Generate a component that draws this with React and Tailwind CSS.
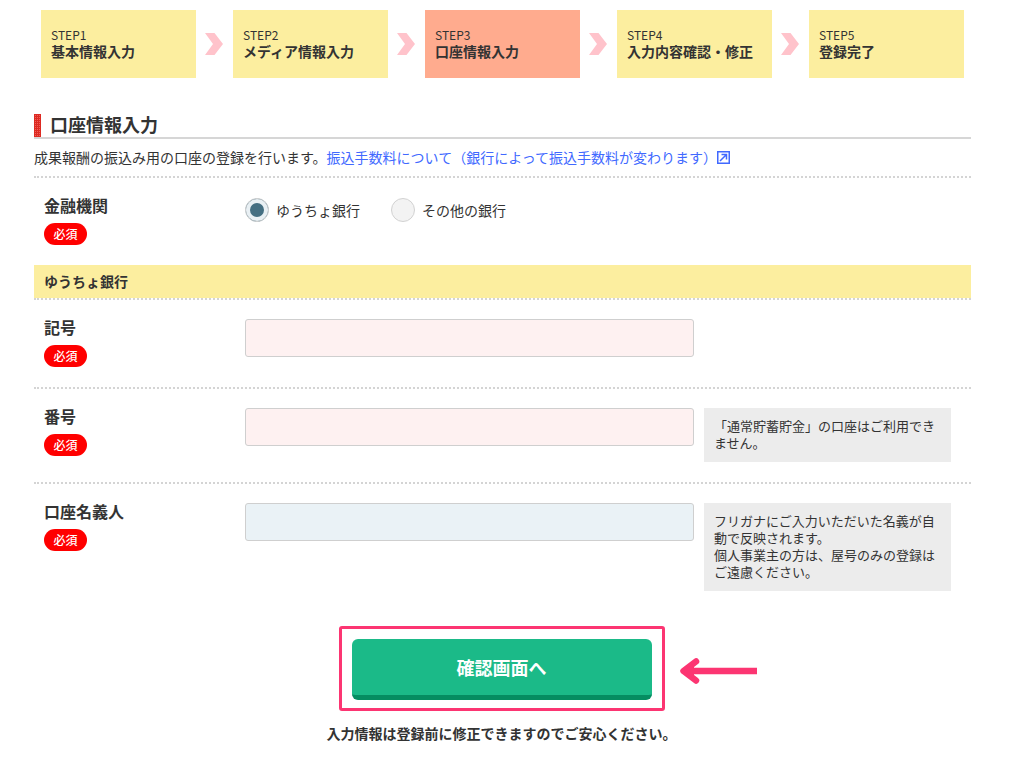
import { Fragment } from "react";

const steps = [
  { label: "STEP1", title: "基本情報入力" },
  { label: "STEP2", title: "メディア情報入力" },
  { label: "STEP3", title: "口座情報入力", current: true },
  { label: "STEP4", title: "入力内容確認・修正" },
  { label: "STEP5", title: "登録完了" },
];

function StepArrow() {
  return (
    <svg className="block h-[22px] w-[18px] shrink-0" viewBox="0 0 18 22" aria-hidden="true">
      <path d="M0 0h9.5L18 11 9.5 22H0l8-11z" fill="#ffc3cb" />
    </svg>
  );
}

function Steps() {
  return (
    <ol className="flex items-center gap-[9px] px-[7px]">
      {steps.map((step, i) => (
        <Fragment key={step.label}>
          {i > 0 && (
            <li aria-hidden="true" className="pr-px pb-px">
              <StepArrow />
            </li>
          )}
          <li
            aria-current={step.current ? "step" : undefined}
            className={
              "flex h-[68px] min-w-0 flex-1 flex-col justify-center pb-[2px] pl-[10px] " +
              (step.current ? "bg-[#ffab8e]" : "bg-[#fcee9f]")
            }
          >
            <span className="text-xs leading-4">{step.label}</span>
            <span className="text-sm leading-4 font-bold whitespace-nowrap">{step.title}</span>
          </li>
        </Fragment>
      ))}
    </ol>
  );
}

function Required() {
  return (
    <span className="flex h-[22px] w-[43px] items-center justify-center rounded-full bg-[#ff0000] text-xs font-medium text-white">
      必須
    </span>
  );
}

const rowClass =
  "grid grid-cols-[191px_1fr_247px] items-start gap-x-[10px] pt-[19px] pr-5 pb-5 pl-[10px]";
const titleClass = "flex flex-col items-start gap-[10px] text-base leading-4 font-bold";

function Field({ id, label, tone, note, last }) {
  return (
    <div className={rowClass + (last ? "" : " border-b-2 border-dotted border-[#d4d4d4]")}>
      <label htmlFor={id} className={titleClass}>
        {label}
        <Required />
      </label>
      <input
        id={id}
        type="text"
        required
        aria-describedby={note ? id + "-note" : undefined}
        className={
          "h-[38px] w-full rounded-[3px] border border-[#cfcfcf] px-2 text-sm outline-none " +
          (tone === "blue" ? "bg-[#eaf2f6]" : "bg-[#fef1f1]")
        }
      />
      {note && (
        <p id={id + "-note"} className="bg-[#ececec] px-[10px] pt-[9px] pb-[11px] text-[13px] leading-[17px]">
          {note}
        </p>
      )}
    </div>
  );
}

function BankRadio({ label, ...props }) {
  return (
    <label className="flex items-center gap-[7px] text-sm">
      <input
        type="radio"
        name="bank"
        className="size-6 appearance-none rounded-full border border-[#d2d2d2] bg-[#f3f3f3] checked:bg-[#446f82] checked:shadow-[inset_0_0_0_4px_#e9f0f4]"
        {...props}
      />
      {label}
    </label>
  );
}

export default function App() {
  return (
    <main className="min-h-screen bg-white pt-[10px] pr-[53px] pb-5 pl-[34px] font-['Noto_Sans_CJK_JP',sans-serif] text-[#333]">
      <Steps />

      <h1 className="mt-9 flex items-stretch gap-[9px] border-b-2 border-[#d6d6d6] text-lg font-bold">
        <span
          aria-hidden="true"
          className="w-[7px] bg-[#f0605a] bg-[linear-gradient(#dd2a22_1px,transparent_1px),linear-gradient(90deg,#dd2a22_1px,transparent_1px)] bg-[size:2px_2px]"
        />
        <span className="pb-[3px] leading-5">口座情報入力</span>
      </h1>

      <p className="flex h-[39px] items-center border-b-2 border-dotted border-[#d4d4d4] pb-[2px] text-sm whitespace-nowrap">
        成果報酬の振込み用の口座の登録を行います。
        <a href="#fee" className="flex items-center text-[#4169ff]">
          振込手数料について（銀行によって振込手数料が変わります）
          <svg className="mt-[2px] size-[13px]" viewBox="0 0 13 13" fill="none" stroke="currentColor" aria-hidden="true">
            <path d="M.75.75h11.5v11.5H.75z" strokeWidth="1.5" />
            <path d="M3 10l6-6M4.5 3.5h5v5" strokeWidth="1.5" />
          </svg>
        </a>
      </p>

      <form onSubmit={(e) => e.preventDefault()}>
        <div className={rowClass} role="radiogroup" aria-labelledby="bank-title">
          <div id="bank-title" className={titleClass}>
            金融機関
            <Required />
          </div>
          <div className="flex gap-[31px] pt-px">
            <BankRadio label="ゆうちょ銀行" value="yucho" defaultChecked />
            <BankRadio label="その他の銀行" value="other" />
          </div>
        </div>

        <h2 className="border-b-2 border-dotted border-[#d4d4d4] bg-[#fcee9f] bg-clip-padding pl-[10px] text-sm leading-[33px] font-bold">
          ゆうちょ銀行
        </h2>

        <Field id="symbol" label="記号" />
        <Field id="number" label="番号" note="「通常貯蓄貯金」の口座はご利用できません。" />
        <Field
          id="holder"
          label="口座名義人"
          tone="blue"
          last
          note={
            <>
              フリガナにご入力いただいた名義が自動で反映されます。
              <br />
              個人事業主の方は、屋号のみの登録はご遠慮ください。
            </>
          }
        />

        <div className="mt-[15px] flex flex-col items-center pr-[2px]">
          <div className="relative rounded-[3px] border-3 border-[#fc3572] px-[10px] pt-[10px] pb-2">
            <button
              type="submit"
              className="block h-[61px] w-[300px] rounded-md border-b-5 border-[#058d61] bg-[#1bba88] text-lg font-bold text-white"
            >
              確認画面へ
            </button>
            <svg
              className="absolute top-[28px] left-full ml-[18px] h-[28px] w-[77px]"
              viewBox="0 0 77 28"
              fill="none"
              stroke="#fc3572"
              aria-hidden="true"
            >
              <path d="M5 14h72" strokeWidth="6.5" />
              <path d="M16 4.500L3.500 14 16 23.500" strokeWidth="6.500" strokeLinecap="round" strokeLinejoin="round" />
              <path d="M3.500 14L14 6v16z" fill="#fc3572" stroke="none" />
            </svg>
          </div>
          <p className="mt-[12px] text-sm font-bold">入力情報は登録前に修正できますのでご安心ください。</p>
        </div>
      </form>
    </main>
  );
}
